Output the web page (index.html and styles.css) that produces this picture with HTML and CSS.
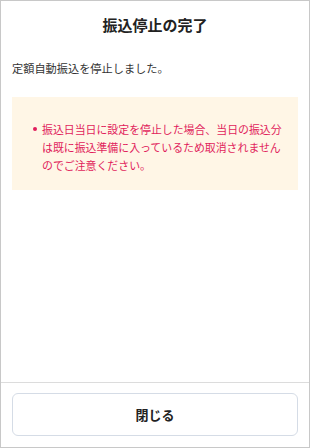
FILE: index.html
```html
<!DOCTYPE html>
<html lang="ja">
<head>
<meta charset="utf-8">
<link rel="stylesheet" href="styles.css">
</head>
<body>
<div class="frame">
  <main class="content">
    <h1 class="title">振込停止の完了</h1>
    <p class="message">定額自動振込を停止しました。</p>
    <div class="notice">
      <ul class="notice-list">
        <li>振込日当日に設定を停止した場合、当日の振込分は既に振込準備に入っているため取消されませんのでご注意ください。</li>
      </ul>
    </div>
  </main>
  <footer class="footer">
    <button class="close-btn" type="button">閉じる</button>
  </footer>
</div>
</body>
</html>
```
FILE: styles.css
```css
* { box-sizing: border-box; }
html, body { margin: 0; padding: 0; background: #fff; }
body {
  font-family: "Noto Sans CJK JP", "Noto Sans", sans-serif;
  color: #333;
}
.frame {
  width: 310px;
  height: 448px;
  border: 1px solid #c8c8c8;
  display: flex;
  flex-direction: column;
  background: #fff;
}
.content {
  flex: 1;
  padding: 0 11px;
}
.title {
  margin: 0;
  height: 48px;
  line-height: 48px;
  text-align: center;
  font-size: 15px;
  font-weight: 700;
  color: #222;
}
.message {
  margin: 10px 0 0;
  font-size: 11.2px;
  line-height: 18px;
  color: #333;
}
.notice {
  margin-top: 20px;
  background: #fff6e6;
  padding: 23px 8px 16px 20px;
}
.notice-list {
  margin: 0;
  padding: 0 0 0 10px;
  list-style: none;
}
.notice-list li {
  position: relative;
  font-size: 10.9px;
  line-height: 18px;
  color: #e11d5c;
}
.notice-list li::before {
  content: "";
  position: absolute;
  left: -9px;
  top: 7px;
  width: 4px;
  height: 4px;
  border-radius: 50%;
  background: #e11d5c;
}
.footer {
  border-top: 1px solid #dcdcdc;
  padding: 10px 11px 11px;
}
.close-btn {
  display: block;
  width: 100%;
  height: 43px;
  border: 1px solid #d5dce6;
  border-radius: 6px;
  background: #fff;
  font-family: inherit;
  font-size: 13px;
  font-weight: 700;
  color: #222;
  cursor: pointer;
}
```
